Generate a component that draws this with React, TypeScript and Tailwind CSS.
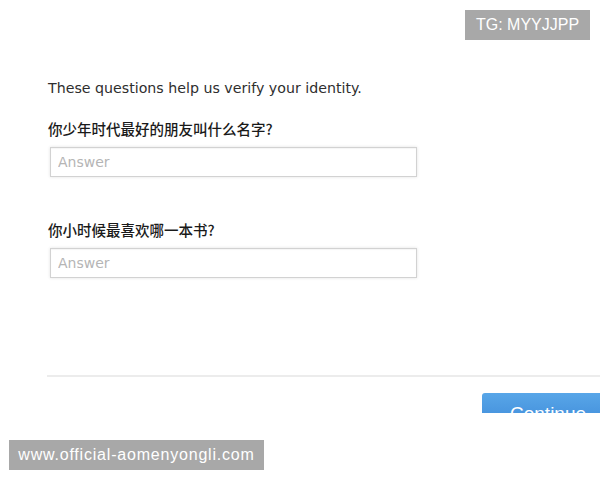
import React from 'react';

const QUESTIONS = ['你少年时代最好的朋友叫什么名字?', '你小时候最喜欢哪一本书?'];

function AnswerField() {
  return (
    <input
      type="text"
      placeholder="Answer"
      className="block w-[367px] h-[30px] ml-[2px] px-[7px] border border-[#d2d2d2] bg-white text-[14px] text-[#333] placeholder:text-[#b5b5b5] shadow-[0_0_3px_rgba(0,0,0,0.12),inset_0_1px_1px_rgba(0,0,0,0.04)] outline-none"
      style={{ fontFamily: '"DejaVu Sans", sans-serif' }}
    />
  );
}

export default function App() {
  return (
    <div className="relative w-[600px] h-[480px] bg-white overflow-hidden" style={{ fontFamily: '"DejaVu Sans", "Noto Sans CJK SC", sans-serif' }}>
      <div className="h-[413px] overflow-hidden pt-[78px]">
        <div className="pl-[48px]">
          <p className="text-[14.2px] leading-[20px] text-[#2e2e2e]">These questions help us verify your identity.</p>

          <div className="mt-[20px] flex flex-col gap-[42px]">
            {QUESTIONS.map((q) => (
              <div key={q}>
                <p className="text-[14.5px] leading-[22px] font-medium text-[#1a1a1a] mb-[7px]" style={{ fontFamily: '"Noto Sans CJK SC", sans-serif' }}>
                  {q}
                </p>
                <AnswerField />
              </div>
            ))}
          </div>
        </div>

        <div className="mt-[97px] ml-[47px] h-[2px] bg-[#ececec]" />

        <div className="flex justify-end mt-[16px]">
          <div className="w-[118px] h-[40px] pl-[28px] pt-[9px] rounded-tl-[3px] bg-gradient-to-b from-[#58a6e8] to-[#3b86d6] text-white text-[19px] leading-[24px]" style={{ fontFamily: '"Liberation Sans", sans-serif' }}>
            Continue
          </div>
        </div>
      </div>

      {/* watermarks */}
      <div className="absolute top-[10px] left-[465px] w-[125px] h-[30px] bg-[#a8a8a8] text-white text-[16px] leading-[30px] text-center" style={{ fontFamily: '"Liberation Sans", sans-serif' }}>
        TG: MYYJJPP
      </div>
      <div className="absolute top-[440px] left-[9px] w-[255px] h-[30px] bg-[#a8a8a8] text-white text-[16px] tracking-[0.8px] leading-[30px] text-center" style={{ fontFamily: '"Liberation Sans", sans-serif' }}>
        www.official-aomenyongli.com
      </div>
    </div>
  );
}
